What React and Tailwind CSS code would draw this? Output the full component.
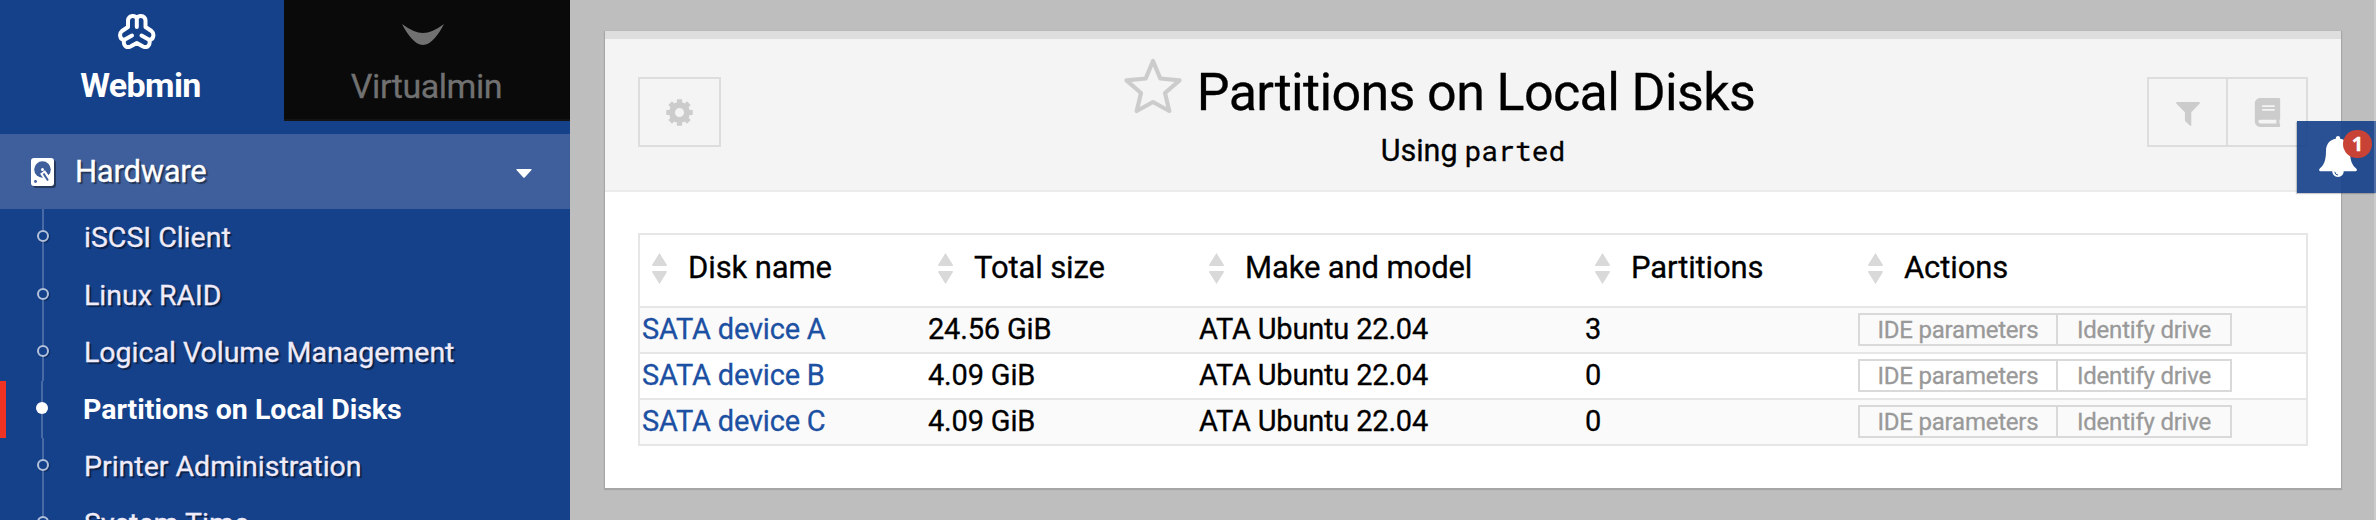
import { FaBook } from 'react-icons/fa';

const items = [
  { label: 'iSCSI Client' },
  { label: 'Linux RAID' },
  { label: 'Logical Volume Management' },
  { label: 'Partitions on Local Disks', active: true },
  { label: 'Printer Administration' },
  { label: 'System Time' },
];

const columns = ['Disk name', 'Total size', 'Make and model', 'Partitions', 'Actions'];
const rows = [
  ['SATA device A', '24.56 GiB', 'ATA Ubuntu 22.04', '3'],
  ['SATA device B', '4.09 GiB', 'ATA Ubuntu 22.04', '0'],
  ['SATA device C', '4.09 GiB', 'ATA Ubuntu 22.04', '0'],
];
const grid = 'grid grid-cols-[286px_271px_386px_273px_1fr]';

function WebminLogo() {
  return (
    <svg className="h-[35px] w-[38px]" viewBox="0 0 38 35" fill="none" stroke="currentColor" strokeWidth="4" strokeLinecap="round" strokeLinejoin="round">
      <path d="M18.800 13V5C18.800 1 10 0.800 10 6.500V13L4 17C1 19.500 1.500 25 6 26C5 31 8 34.500 12.500 32.500L18.800 29L25 32.500C29.500 34.500 32.500 31 31.500 26C36 25 36.500 19.500 33.500 17L27.500 13V6.500C27.500 0.800 18.800 1 18.800 5" />
      <path d="M6 26L14 21.500M31.500 26L23.500 21.500" />
    </svg>
  );
}

function DiskIcon() {
  return (
    <svg className="h-[28px] w-[23px] drop-shadow-[2px_2px_0_rgba(0,0,0,0.4)]" viewBox="0 0 23 28">
      <rect width="23" height="28" rx="3" fill="#fff" />
      <circle cx="11.500" cy="11.500" r="8.300" fill="#3e5f9c" />
      <circle cx="4.500" cy="23.500" r="1.400" fill="#3e5f9c" />
      <path d="M11.500 14L18 23" stroke="#fff" strokeWidth="6" />
      <circle cx="11.500" cy="11.500" r="1.500" fill="#fff" />
      <path d="M12.500 15.500L17 22.500" stroke="#3e5f9c" strokeWidth="2" />
    </svg>
  );
}

function SortIcon() {
  return (
    <svg className="h-[31px] w-[15px]" viewBox="0 0 16 31" preserveAspectRatio="none" fill="#d9d9d9">
      <path d="M8 0L16 12Q16 13 15 13H1Q0 13 0 12ZM8 31L0 19Q0 18 1 18H15Q16 18 16 19Z" />
    </svg>
  );
}

function StarIcon() {
  return (
    <svg className="h-[57px] w-[58px]" viewBox="0 0 58 57" fill="none" stroke="#cccccc" strokeWidth="4.200" strokeLinejoin="round">
      <path d="M29 3L36.300 20.500L55.500 22.300L41 35L45.300 53L29 44L12.700 53L17 35L2.500 22.300L21.700 20.500Z" />
    </svg>
  );
}

function GearIcon() {
  return (
    <svg className="h-[27px] w-[27px]" viewBox="-13.500 -13.500 27 27" fill="none" stroke="#cccccc">
      <circle r="7.500" strokeWidth="6" />
      {[0, 45, 90, 135].map((a) => (
        <path key={a} d="M0 -13.200V-8M0 13.200V8" strokeWidth="5.200" transform={`rotate(${a})`} />
      ))}
    </svg>
  );
}

function FunnelIcon() {
  return (
    <svg className="h-[24px] w-[24px]" viewBox="0 0 24 24" fill="#cccccc">
      <path d="M1 0H23Q24.500 0.300 23.500 1.800L15.300 10.300V23.300Q15 24.500 13.800 23.500L9.300 19.300Q8.900 18.800 8.900 18V10.300L0.500 1.800Q-0.500 0.300 1 0Z" />
    </svg>
  );
}

function BellIcon() {
  return (
    <svg className="h-[41px] w-[38px]" viewBox="0 0 38 41">
      <path fill="currentColor" d="M19 0C17.500 0 16.800 1 16.800 2.800C10.500 3.800 7 8.500 7 15C7 25 4.500 29.500 0.800 32.500C-0.500 34 0.200 35.300 2 35.300H13.300C13.300 38.500 15.700 41 19 41S24.700 38.500 24.700 35.300H36C37.800 35.300 38.500 34 37.200 32.500C33.500 29.500 31 25 31 15C31 8.500 27.500 3.800 21.200 2.800C21.200 1 20.500 0 19 0Z" />
      <path fill="none" stroke="#2a5396" strokeWidth="1" d="M15.800 35.800Q16 38.800 19 39" />
    </svg>
  );
}

function Sidebar() {
  return (
    <aside className="h-full w-[570px] shrink-0 overflow-hidden bg-[#15418b] text-white">
      <div className="flex h-[134px]">
        <div className="flex w-[284px] flex-col items-center pt-[14px] pr-[11px]">
          <WebminLogo />
          <span className="mt-[16px] ml-[8px] text-[34px] leading-[40px] font-bold tracking-[-0.6px] [-webkit-text-stroke:0px]">Webmin</span>
        </div>
        <div className="flex h-[121px] w-[286px] flex-col items-center border-b-2 border-[#141414] bg-[#0a0a0a] pt-[24px] text-[#717171]">
          <svg className="mr-[8px] h-[21px] w-[42px]" viewBox="0 0 42 21" fill="currentColor">
            <path d="M0 0Q12 9 21 9Q30 9 42 0C37 10 29 21 21 21C13 21 5 10 0 0Z" />
          </svg>
          <span className="mt-[21px] mr-[1px] text-[34px] leading-[40px] tracking-[-0.45px]">Virtualmin</span>
        </div>
      </div>
      <div className="flex h-[75px] items-center bg-[#3e5f9c] pr-[38px] pl-[31px]">
        <DiskIcon />
        <span className="mt-[1px] ml-[21px] flex-1 text-[31px] tracking-[-0.25px] [text-shadow:2px_2px_1px_rgba(0,0,0,0.45)]">Hardware</span>
        <svg className="mt-[3px] h-[9px] w-[16px]" viewBox="0 0 16 9" fill="#fff"><path d="M1 0H15Q16 0 15.500 1L8.700 8.500Q8 9 7.300 8.500L0.500 1Q0 0 1 0Z" /></svg>
      </div>
      <nav className="flex flex-col">
        {items.map(({ label, active }) => (
          <div key={label} className={active ? 'flex h-[57px] shrink-0 border-l-[6px] border-[#ee3224] pl-[30px]' : 'flex h-[57px] shrink-0 pl-[37px] first:h-[58px]'}>
            <div className="flex w-[12px] flex-col items-center">
              <i className="h-[21px] w-[2px] bg-[#486ba5]" />
              <i className={active ? 'h-[12px] w-[12px] rounded-full bg-white' : 'h-[12px] w-[12px] rounded-full border-2 border-[#b3c1da] shadow-[1px_1px_1px_rgba(0,0,0,0.4)]'} />
              <i className="w-[2px] flex-1 bg-[#486ba5]" />
            </div>
            <span className={active ? 'ml-[35px] text-[28.5px] leading-[57px] font-bold [-webkit-text-stroke:0px]' : 'ml-[35px] text-[28.5px] leading-[57px] text-[#efebf8] [text-shadow:2px_2px_1px_rgba(0,0,0,0.5)]'}>{label}</span>
          </div>
        ))}
      </nav>
    </aside>
  );
}

export default function App() {
  return (
    <div className="relative flex h-[520px] w-[2376px] overflow-hidden bg-[#bebebe] font-['Roboto',sans-serif] text-black [-webkit-text-stroke:0.3px]">
      <Sidebar />
      <main className="mt-[31px] ml-[35px] h-[457px] w-[1736px] border-t-8 border-[#dedede] bg-white shadow-[0_1px_1px_1px_rgba(0,0,0,0.12)]">
        <header className="grid h-[153px] grid-cols-[1fr_auto_1fr] border-b-2 border-[#ebebeb] bg-[#f4f4f4] px-[33px] pt-[38px]">
          <div className="flex h-[70px] w-[83px] items-center justify-center border-2 border-[#dddddd]"><GearIcon /></div>
          <div className="-mt-[19px] flex flex-col items-center">
            <div className="mr-[67px] flex">
              <StarIcon />
              <h1 className="mt-[5px] ml-[15px] text-[52px] leading-[60px] tracking-[-0.62px]">Partitions on Local Disks</h1>
            </div>
            <p className="mt-[8px] text-[30.5px] leading-[40px]">Using<span className="ml-[7px] font-['Roboto_Mono','DejaVu_Sans_Mono',monospace] text-[28px]">parted</span></p>
          </div>
          <div className="flex h-[70px] w-[161px] justify-self-end border-2 border-[#dddddd] text-[#cccccc]">
            <div className="flex w-[79px] items-center justify-center border-r-2 border-[#dddddd] pt-[4px]"><FunnelIcon /></div>
            <div className="flex flex-1 items-center justify-center text-[29px]"><FaBook /></div>
          </div>
        </header>
        <section className="mx-[33px] mt-[41px] border-2 border-[#e6e6e6]">
          <div className={`${grid} h-[71px]`}>
            {columns.map((c) => (
              <div key={c} className="flex pt-[18px] pl-[12px]">
                <SortIcon />
                <span className="-mt-[1px] ml-[21px] text-[31px] leading-[31px] tracking-[-0.12px]">{c}</span>
              </div>
            ))}
          </div>
          {rows.map((r) => (
            <div key={r[0]} className={`${grid} h-[46px] border-t-2 border-[#e6e6e6] text-[29px] leading-[42px] tracking-[-0.18px] odd:bg-white even:bg-[#fafafa]`}>
              {r.map((v, i) => (
                <span key={i} className={i === 0 ? 'pl-[2px] text-[#1c50a2]' : 'pl-[2px]'}>{v}</span>
              ))}
              <div className="flex pt-[5px] pl-[2px] text-[24px] leading-[30px] tracking-[-0.22px] text-[#999999]">
                <span className="h-[33px] w-[200px] border-2 border-[#d9d9d9] text-center">IDE parameters</span>
                <span className="h-[33px] w-[174px] border-2 border-l-0 border-[#d9d9d9] text-center">Identify drive</span>
              </div>
            </div>
          ))}
        </section>
      </main>
      <div className="absolute top-[121px] left-[2297px] flex h-[72px] w-[79px] items-start bg-[#15418b]/91 pt-[15px] pl-[22px] text-white shadow-[-1px_1px_1px_rgba(0,0,0,0.2)]">
        <BellIcon />
        <span className="absolute top-[9px] left-[46px] h-[28px] w-[29px] rounded-full bg-[#c84335] text-center font-['Open_Sans',sans-serif] text-[20px] leading-[27px] font-bold">1</span>
      </div>
      <div className="absolute top-0 right-0 h-full w-[2px] bg-white/20" />
    </div>
  );
}
